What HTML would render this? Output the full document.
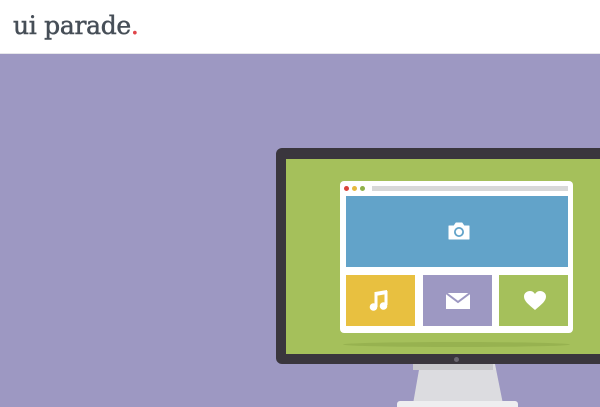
<!DOCTYPE html>
<html><head><style>
*{margin:0;padding:0}
body{width:600px;height:407px;overflow:hidden;background:#9d98c2;position:relative;font-family:"Liberation Serif",serif}
.hdr{position:absolute;left:0;top:0;width:600px;height:53px;background:#fff;border-bottom:1px solid #e6e6ea}
.logo{position:absolute;left:13px;top:11px;font-family:"DejaVu Serif",serif;font-size:25px;color:#464e57;letter-spacing:-0.3px;-webkit-text-stroke:0.5px #464e57}
.logo span{color:#e0454a;-webkit-text-stroke:0.5px #e0454a}
.a{position:absolute}
</style></head><body>
<div class="hdr"><div class="logo">ui parade<span>.</span></div></div>
<div class="a" style="left:276px;top:148px;width:340px;height:216px;background:#3a363d;border-radius:6px"></div>
<div class="a" style="left:286px;top:159px;width:320px;height:195px;background:#a5c05b"></div>
<div class="a" style="left:343px;top:342px;width:227px;height:5px;background:#97b250;border-radius:50%"></div>
<div class="a" style="left:340px;top:181px;width:233px;height:152px;background:#fff;border-radius:4px"></div>
<div class="a" style="left:344px;top:186px;width:5px;height:5px;border-radius:50%;background:#d9443a"></div>
<div class="a" style="left:352px;top:186px;width:5px;height:5px;border-radius:50%;background:#e6b93e"></div>
<div class="a" style="left:360px;top:186px;width:5px;height:5px;border-radius:50%;background:#8fb14a"></div>
<div class="a" style="left:372px;top:186px;width:196px;height:5px;background:#d8d8d8"></div>
<div class="a" style="left:346px;top:196px;width:222px;height:71px;background:#62a3c9"></div>
<div class="a" style="left:346px;top:275px;width:69px;height:51px;background:#e8c040"></div>
<div class="a" style="left:423px;top:275px;width:69px;height:51px;background:#9d98c2"></div>
<div class="a" style="left:499px;top:275px;width:69px;height:51px;background:#a5c05b"></div>
<svg class="a" style="left:447px;top:221px" width="24" height="20" viewBox="0 0 24 20"><path d="M2 5h5l2-3h6l2 3h5v13H2z" fill="#fff" stroke="#fff" stroke-width="1" stroke-linejoin="round"/><circle cx="12" cy="11" r="5" fill="#62a3c9"/><circle cx="12" cy="11" r="3.2" fill="#fff"/></svg>
<svg class="a" style="left:369px;top:288px" width="20" height="24" viewBox="0 0 20 24"><path d="M6 4l12-2v4L6 8z" fill="#fff"/><path d="M7 4v15M17 3v14" stroke="#fff" stroke-width="3"/><circle cx="4.5" cy="19" r="3.8" fill="#fff"/><circle cx="14.5" cy="18" r="3.8" fill="#fff"/></svg>
<svg class="a" style="left:446px;top:293px" width="24" height="16" viewBox="0 0 24 16"><rect width="24" height="16" fill="#fff"/><path d="M0 0l12 9 12-9" stroke="#9d98c2" stroke-width="2" fill="none"/></svg>
<svg class="a" style="left:524px;top:291px" width="22" height="20" viewBox="0 0 22 20"><path d="M11 19C4 13 0 10 0 5.5 0 2 3 0 6 0c2.5 0 4 1.5 5 3 1-1.5 2.5-3 5-3 3 0 6 2 6 5.5C22 10 18 13 11 19z" fill="#fff"/></svg>
<div class="a" style="left:454px;top:357px;width:5px;height:5px;border-radius:50%;background:#6a6670"></div>
<div class="a" style="left:405px;top:364px;width:100px;height:40px;background:#dcdce0;clip-path:polygon(15% 0,90% 0,98% 100%,8% 100%)"></div>
<div class="a" style="left:413px;top:364px;width:80px;height:6px;background:#c8c8cc"></div>
<div class="a" style="left:397px;top:401px;width:121px;height:6px;background:#eeeef0;border-radius:3px 3px 0 0"></div>
</body></html>
